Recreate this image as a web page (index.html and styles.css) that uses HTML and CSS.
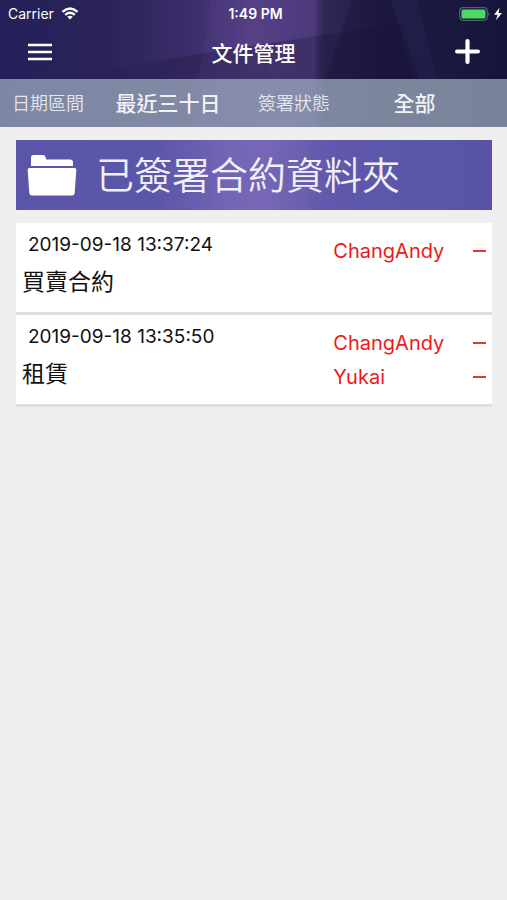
FILE: index.html
```html
<!DOCTYPE html>
<html lang="zh-Hant">
<head>
<meta charset="utf-8">
<meta name="viewport" content="width=device-width, initial-scale=1">
<title>文件管理</title>
<link rel="stylesheet" href="styles.css">
</head>
<body>
<header class="header">
  <svg class="backdrop" viewBox="0 0 507 127" preserveAspectRatio="none" aria-hidden="true">
    <defs>
      <linearGradient id="base">
        <stop offset="0" stop-color="#24205a"/>
        <stop offset=".2" stop-color="#292358"/>
        <stop offset=".38" stop-color="#3c2d6b"/>
        <stop offset=".5" stop-color="#523f83"/>
        <stop offset=".62" stop-color="#463671"/>
        <stop offset=".64" stop-color="#302656"/>
        <stop offset=".76" stop-color="#1e1b42"/>
        <stop offset="1" stop-color="#15153c"/>
      </linearGradient>
      <linearGradient id="shade">
        <stop offset="0" stop-color="#181338" stop-opacity="0"/>
        <stop offset=".5" stop-color="#181338" stop-opacity=".4"/>
        <stop offset="1" stop-color="#181338" stop-opacity=".25"/>
      </linearGradient>
    </defs>
    <rect width="507" height="127" fill="url(#base)"/>
    <path d="M50 79 L215 51 L405 23 L430 79 V127 H50Z" fill="url(#shade)"/>
    <path d="M210 0 H316 V127 H190 L205 40Z" fill="#8a63c0" opacity=".07"/>
    <path d="M268 0 H316 V127 H268Z" fill="#8a63c0" opacity=".04"/>
    <path d="M352 0 H392 L412 79 H325Z" fill="#171231" opacity=".3"/>
    <path d="M390 0 H416 L437 79 H420Z" fill="#30306b" opacity=".22"/>
  </svg>

  <div class="status">
    <div class="status-side">
      <span>Carrier</span>
      <svg class="wifi" viewBox="0 0 18 13" aria-hidden="true">
        <path d="M1.500 4.800 Q9 -1.600 16.500 4.800 M4.200 7.800 Q9 3.800 13.800 7.800" fill="none" stroke="#fff" stroke-width="2.400"/>
        <path d="M6.200 9.700 Q9 7.600 11.800 9.700 L9 12.500Z" fill="#fff"/>
      </svg>
    </div>
    <span class="clock">1:49 PM</span>
    <div class="status-side status-end">
      <svg class="battery" viewBox="0 0 44 14" aria-hidden="true">
        <rect x=".7" y=".7" width="27.600" height="12.600" rx="3.500" fill="none" stroke="#5d5b78" stroke-width="1.200"/>
        <rect x="2.500" y="2.500" width="24" height="9" rx="1.500" fill="#4cd964"/>
        <path d="M29.500 5 Q31.500 7 29.500 9Z" fill="#77758f"/>
        <path d="M40.500 .8 L35 7.800 H38.500 L37 13.200 L43 6 H39.500Z" fill="#fff"/>
      </svg>
    </div>
  </div>

  <nav class="nav">
    <button class="icon-button" type="button" aria-label="選單">
      <svg class="menu-icon" viewBox="0 0 24 18" aria-hidden="true"><path d="M0 2H24M0 9H24M0 16H24" stroke="#fff" stroke-width="2.400"/></svg>
    </button>
    <h1 class="title">文件管理</h1>
    <button class="icon-button" type="button" aria-label="新增">
      <svg class="plus-icon" viewBox="0 0 24 24" aria-hidden="true"><path d="M12 2V22M2 12H22" stroke="#fff" stroke-width="4" stroke-linecap="round"/></svg>
    </button>
  </nav>

  <div class="filters">
    <span class="filter-label" id="range-label">日期區間</span>
    <button class="filter-value" type="button" aria-describedby="range-label">最近三十日</button>
    <span class="filter-label" id="state-label">簽署狀態</span>
    <button class="filter-value" type="button" aria-describedby="state-label">全部</button>
  </div>
</header>

<main class="content">
  <button class="folder" type="button">
    <svg class="folder-icon" viewBox="0 0 50 42" aria-hidden="true">
      <path d="M4 12 V3.500 Q4 1 6.500 1 H16 Q18 1 18.500 3 L19.200 5.500 H43 Q46 5.500 46 8.500 V12Z M2.500 14 H47.500 Q49.500 14 49.300 16 L47.700 39 Q47.500 41.500 45 41.500 H5 Q2.500 41.500 2.300 39 L.7 16 Q.5 14 2.500 14Z" fill="#fff"/>
    </svg>
    <span>已簽署合約資料夾</span>
  </button>

  <ul class="documents">
    <li class="document">
      <div class="details">
        <time class="date">2019-09-18 13:37:24</time>
        <h2 class="name">買賣合約</h2>
      </div>
      <ul class="signers">
        <li class="signer"><span>ChangAndy</span><i class="dash"></i></li>
      </ul>
    </li>
    <li class="document">
      <div class="details">
        <time class="date">2019-09-18 13:35:50</time>
        <h2 class="name">租賃</h2>
      </div>
      <ul class="signers">
        <li class="signer"><span>ChangAndy</span><i class="dash"></i></li>
        <li class="signer"><span>Yukai</span><i class="dash"></i></li>
      </ul>
    </li>
  </ul>
</main>
</body>
</html>
```
FILE: styles.css
```css
* { box-sizing: border-box; }

body {
  margin: 0;
  min-height: 100vh;
  background: #efefef;
  color: #111;
  font-family: Inter, "Noto Sans CJK TC", sans-serif;
}

button {
  margin: 0;
  padding: 0;
  border: 0;
  background: none;
  color: inherit;
  font: inherit;
}

ul { margin: 0; padding: 0; list-style: none; }
svg { display: block; }

.header { position: relative; color: #fff; }

.backdrop {
  position: absolute;
  inset: 0;
  z-index: -1;
  width: 100%;
  height: 100%;
}

.status {
  display: flex;
  align-items: center;
  height: 27px;
  padding: 0 4px 0 8px;
  font-size: 14px;
}

.status-side { display: flex; flex: 1; align-items: center; gap: 7px; }
.status-end { justify-content: flex-end; }
.clock { font-weight: 600; }
.wifi { width: 18px; height: 13px; }
.battery { width: 44px; height: 14px; }

.nav {
  display: flex;
  align-items: center;
  justify-content: space-between;
  height: 52px;
  padding: 0 20px 3px;
}

.icon-button { display: grid; place-items: center; width: 40px; height: 40px; }
.menu-icon { width: 24px; height: 18px; }
.plus-icon { width: 25px; height: 25px; }
.title { margin: 0; font-size: 21px; font-weight: 500; }

.filters {
  display: grid;
  grid-template-columns: 96fr 144fr 108fr 133fr;
  align-items: center;
  height: 48px;
  padding: 0 26px 2px 0;
  background: rgba(164, 179, 197, 0.7);
}

.filter-label {
  color: #e4e5ed;
  font-size: 18px;
  font-weight: 350;
  text-align: center;
}

.filter-value { color: #f2f2f5; font-size: 21px; font-weight: 500; }

.content { padding: 13px 15px 0 16px; }

.folder {
  display: flex;
  align-items: center;
  gap: 19px;
  width: 100%;
  height: 70px;
  padding: 0 11px;
  background: linear-gradient(90deg, #5a55a9 0%, #5c56aa 30%, #7366b4 45%, #7767b6 52%, #6b60b0 60%, #6058ac 66%, #5a57ab 82%, #5853a7 100%);
  color: #f0effa;
  font-size: 38px;
  font-weight: 350;
  line-height: 64px;
  white-space: nowrap;
}

.folder-icon { flex: none; width: 50px; height: 42px; }

.documents { margin-top: 13px; }

.document {
  display: grid;
  grid-template-columns: 2fr 1fr;
  min-height: 92px;
  border-bottom: 3px solid #e0e0e0;
  background: #fff;
}

.details { padding: 10px 6px 0; }
.date { display: block; padding-left: 6px; font-size: 19px; line-height: 24px; }
.name { margin: 8px 0 0; font-size: 23px; font-weight: 400; line-height: 34px; }

.signers { padding: 11px 6px 0 0; color: #f01818; font-size: 20px; line-height: 34px; }
.signer { display: flex; align-items: center; justify-content: space-between; }
.dash { width: 13px; height: 2px; background: #dc3a3a; }
```
